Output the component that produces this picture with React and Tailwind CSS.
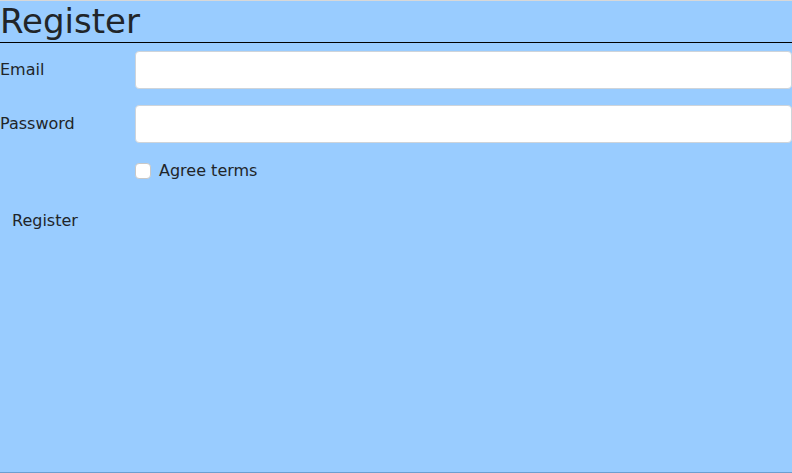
export default function App() {
  return (
    <div className="w-[792px] h-[473px] bg-[#99ccff] border-t border-t-[#d8d8d8] border-b border-b-[#6d9fd0] text-[#212529] font-['DejaVu_Sans',sans-serif] flex flex-col">
      <h1 className="text-[34px] leading-[41px] border-b border-black font-normal">Register</h1>
      <form className="flex flex-col mt-2">
        <div className="flex items-center h-[38px]">
          <label className="w-[135px] text-[16px]">Email</label>
          <input type="email" className="flex-1 h-[38px] bg-white border border-[#ced4da] rounded-[4px] outline-none" />
        </div>
        <div className="flex items-center h-[38px] mt-4">
          <label className="w-[135px] text-[16px]">Password</label>
          <input type="password" className="flex-1 h-[38px] bg-white border border-[#ced4da] rounded-[4px] outline-none" />
        </div>
        <div className="flex items-center h-[24px] mt-4 pl-[135px]">
          <span className="w-4 h-4 bg-white border border-[#c8c8c8] rounded-[4px]"></span>
          <span className="ml-2 text-[16px]">Agree terms</span>
        </div>
        <div className="mt-[19px]">
          <button type="button" className="px-3 h-[38px] text-[16px] bg-transparent">Register</button>
        </div>
      </form>
    </div>
  );
}
